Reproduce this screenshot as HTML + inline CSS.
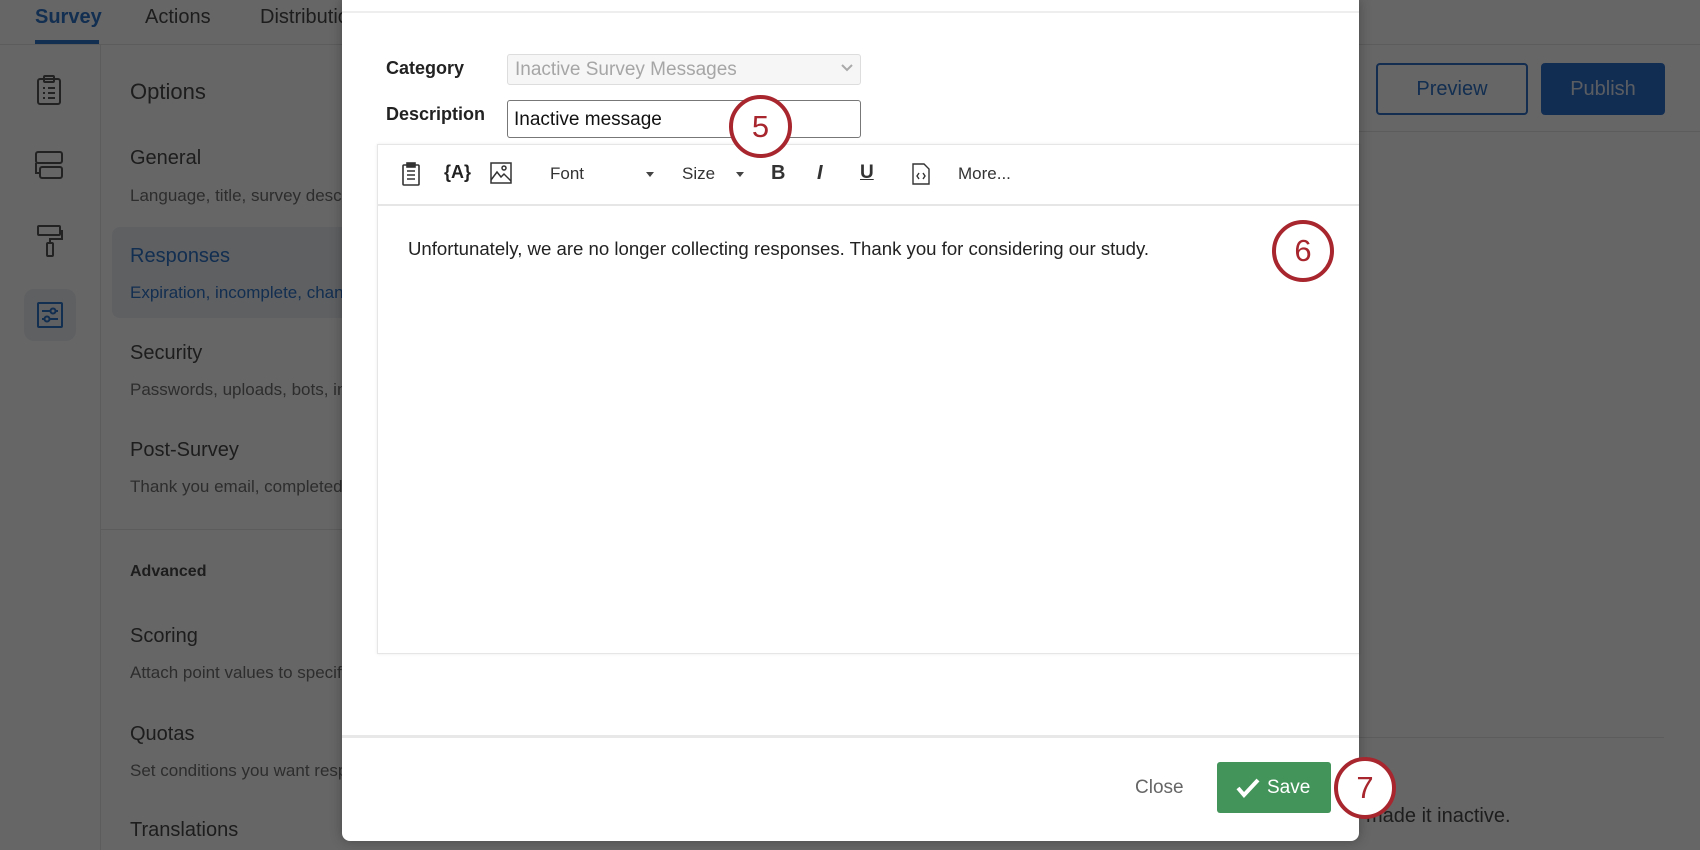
<!DOCTYPE html>
<html><head><meta charset="utf-8"><style>
*{margin:0;padding:0;box-sizing:border-box}
body{width:1700px;height:850px;overflow:hidden;background:#fff;font-family:"Liberation Sans",sans-serif;position:relative}
.a{position:absolute;white-space:nowrap}
.h{font-size:20px;color:#4a4a4a}
.s{font-size:17px;color:#707070}
.circ{position:absolute;border:4px solid #a8262e;border-radius:50%;background:#fff;color:#a8262e;font-size:31px;text-align:center}
</style></head><body>
<div class="a" style="left:35px;top:6px;font-size:20px;font-weight:bold;color:#2f73c9">Survey</div>
<div style="position:absolute;left:35px;top:40px;width:64px;height:4px;background:#2f73c9"></div>
<div class="a" style="left:145px;top:6px;font-size:20px;color:#4a4a4a">Actions</div>
<div class="a" style="left:260px;top:6px;font-size:20px;color:#4a4a4a">Distributions</div>
<div style="position:absolute;left:0;top:44px;width:1700px;height:1px;background:#e6e6e6"></div>
<div style="position:absolute;left:100px;top:45px;width:1px;height:805px;background:#e6e6e6"></div>
<svg style="position:absolute;left:36px;top:74px" width="26" height="32" viewBox="0 0 26 32" fill="none" stroke="#555" stroke-width="2"><rect x="2" y="5" width="22" height="25" rx="2"/><rect x="8" y="2" width="10" height="6" rx="1"/><path d="M7 14h2M12 14h7M7 19h2M12 19h7M7 24h2M12 24h7"/></svg>
<svg style="position:absolute;left:34px;top:150px" width="30" height="30" viewBox="0 0 30 30" fill="none" stroke="#555" stroke-width="2"><rect x="2" y="2" width="26" height="11" rx="2"/><rect x="6" y="17" width="22" height="11" rx="2"/><path d="M2 13v10h4"/></svg>
<svg style="position:absolute;left:36px;top:224px" width="28" height="34" viewBox="0 0 28 34" fill="none" stroke="#555" stroke-width="2"><rect x="2" y="2" width="22" height="9" rx="1"/><path d="M24 7h2v8H14v4"/><rect x="11" y="19" width="6" height="13" rx="1"/></svg>
<div style="position:absolute;left:24px;top:289px;width:52px;height:52px;border-radius:10px;background:#eef1f6"></div>
<svg style="position:absolute;left:36px;top:301px" width="28" height="28" viewBox="0 0 28 28" fill="none" stroke="#2f73c9" stroke-width="2"><rect x="2" y="2" width="24" height="24" rx="1"/><path d="M6 10h16M6 18h16"/><circle cx="17" cy="10" r="2.5" fill="#eef1f6"/><circle cx="11" cy="18" r="2.5" fill="#eef1f6"/></svg>
<div class="a h" style="left:130px;top:79px;font-size:22px">Options</div>
<div class="a h" style="left:130px;top:147px">General</div>
<div class="a s" style="left:130px;top:186px">Language, title, survey description</div>
<div style="position:absolute;left:112px;top:227px;width:240px;height:91px;background:#ecf0f6;border-radius:8px 0 0 8px"></div>
<div class="a h" style="left:130px;top:245px;color:#2f73c9">Responses</div>
<div class="a s" style="left:130px;top:283px;color:#2f73c9">Expiration, incomplete, changes</div>
<div class="a h" style="left:130px;top:342px">Security</div>
<div class="a s" style="left:130px;top:380px">Passwords, uploads, bots, integrity</div>
<div class="a h" style="left:130px;top:439px">Post-Survey</div>
<div class="a s" style="left:130px;top:477px">Thank you email, completed</div>
<div style="position:absolute;left:100px;top:529px;width:260px;height:1px;background:#e6e6e6"></div>
<div class="a" style="left:130px;top:563px;font-size:16px;font-weight:bold;color:#4a4a4a">Advanced</div>
<div class="a h" style="left:130px;top:625px">Scoring</div>
<div class="a s" style="left:130px;top:663px">Attach point values to specific</div>
<div class="a h" style="left:130px;top:723px">Quotas</div>
<div class="a s" style="left:130px;top:761px">Set conditions you want responses</div>
<div class="a h" style="left:130px;top:819px">Translations</div>
<div style="position:absolute;left:1376px;top:63px;width:152px;height:52px;border:2px solid #3070c8;border-radius:4px;color:#2f73c9;font-size:20px;text-align:center;line-height:48px">Preview</div>
<div style="position:absolute;left:1541px;top:63px;width:124px;height:52px;background:#2f70cd;border-radius:4px;color:#e0e8f4;font-size:20px;text-align:center;line-height:52px">Publish</div>
<div style="position:absolute;left:1359px;top:131px;width:341px;height:1px;background:#e6e6e6"></div>
<div style="position:absolute;left:1359px;top:737px;width:305px;height:1px;background:#e6e6e6"></div>
<div class="a" style="left:1366px;top:805px;font-size:20px;color:#4a4a4a">made it inactive.</div>
<div style="position:absolute;left:0;top:0;width:1700px;height:850px;background:rgba(0,0,0,0.6)"></div>
<div style="position:absolute;left:342px;top:0;width:1017px;height:841px;background:#fff;border-radius:0 0 8px 8px;box-shadow:0 0 12px rgba(0,0,0,.3)"></div>
<div style="position:absolute;left:342px;top:11px;width:1017px;height:2px;background:#eee"></div>
<div class="a" style="left:386px;top:58px;font-size:18px;font-weight:bold;color:#222">Category</div>
<div style="position:absolute;left:507px;top:54px;width:354px;height:31px;border:1px solid #ddd;background:#f6f6f6;border-radius:3px"></div>
<div class="a" style="left:515px;top:59px;font-size:19px;color:#a6a6a6">Inactive Survey Messages</div>
<svg style="position:absolute;left:840px;top:63px" width="14" height="10" viewBox="0 0 14 10"><path d="M2 2l5 5 5-5" fill="none" stroke="#aaa" stroke-width="2"/></svg>
<div class="a" style="left:386px;top:104px;font-size:18px;font-weight:bold;color:#222">Description</div>
<div style="position:absolute;left:507px;top:100px;width:354px;height:38px;border:1px solid #777;border-radius:3px"></div>
<div class="a" style="left:514px;top:109px;font-size:19px;color:#111">Inactive message</div>
<div style="position:absolute;left:377px;top:144px;width:982px;height:510px;border:1px solid #e6e6e6;border-right:none;box-shadow:0 0 3px rgba(0,0,0,.08)"></div>
<div style="position:absolute;left:377px;top:204px;width:982px;height:2px;background:#e6e6e6"></div>
<svg style="position:absolute;left:402px;top:162px" width="18" height="24" viewBox="0 0 18 24" fill="none" stroke="#333" stroke-width="1.6"><rect x="1" y="3" width="16" height="20" rx="1"/><rect x="5" y="1" width="8" height="4" fill="#333"/><path d="M5 9h8M5 13h8M5 17h8"/></svg>
<div class="a" style="left:444px;top:162px;font-size:18px;font-weight:bold;color:#222">{A}</div>
<svg style="position:absolute;left:490px;top:162px" width="22" height="22" viewBox="0 0 22 22" fill="none" stroke="#333" stroke-width="1.5"><rect x="1" y="1" width="20" height="20"/><path d="M1 18l6-8 4 5 3-3 7 7"/><circle cx="14" cy="6" r="2"/></svg>
<div class="a" style="left:550px;top:164px;font-size:17px;color:#333">Font</div>
<div style="position:absolute;left:646px;top:172px;border:4px solid transparent;border-top:5px solid #444"></div>
<div class="a" style="left:682px;top:164px;font-size:17px;color:#333">Size</div>
<div style="position:absolute;left:736px;top:172px;border:4px solid transparent;border-top:5px solid #444"></div>
<div class="a" style="left:771px;top:162px;font-size:20px;font-weight:bold;color:#333">B</div>
<div class="a" style="left:817px;top:162px;font-size:20px;font-style:italic;font-weight:bold;color:#333">I</div>
<div class="a" style="left:860px;top:162px;font-size:19px;font-weight:bold;color:#333;text-decoration:underline">U</div>
<svg style="position:absolute;left:912px;top:163px" width="18" height="22" viewBox="0 0 18 22" fill="none" stroke="#333" stroke-width="1.4"><path d="M1 1h11l5 5v15H1z"/><path d="M7 10l-2 3 2 3M11 10l2 3-2 3"/></svg>
<div class="a" style="left:958px;top:164px;font-size:17px;color:#333">More...</div>
<div class="a" style="left:408px;top:238px;font-size:18.6px;color:#222">Unfortunately, we are no longer collecting responses. Thank you for considering our study.</div>
<div style="position:absolute;left:342px;top:735px;width:1017px;height:3px;background:#e8e8e8"></div>
<div class="a" style="left:1135px;top:777px;font-size:19px;color:#666">Close</div>
<div style="position:absolute;left:1217px;top:762px;width:114px;height:51px;background:#43945a;border-radius:3px"></div>
<svg style="position:absolute;left:1236px;top:778px" width="24" height="20" viewBox="0 0 24 20"><path d="M2 10l6 7L22 2" fill="none" stroke="#fff" stroke-width="4"/></svg>
<div class="a" style="left:1267px;top:777px;font-size:19px;color:#fff">Save</div>
<div class="circ" style="left:729px;top:95px;width:63px;height:63px;line-height:55px">5</div>
<div class="circ" style="left:1272px;top:220px;width:62px;height:62px;line-height:54px">6</div>
<div class="circ" style="left:1334px;top:757px;width:62px;height:62px;line-height:54px">7</div>
</body></html>
